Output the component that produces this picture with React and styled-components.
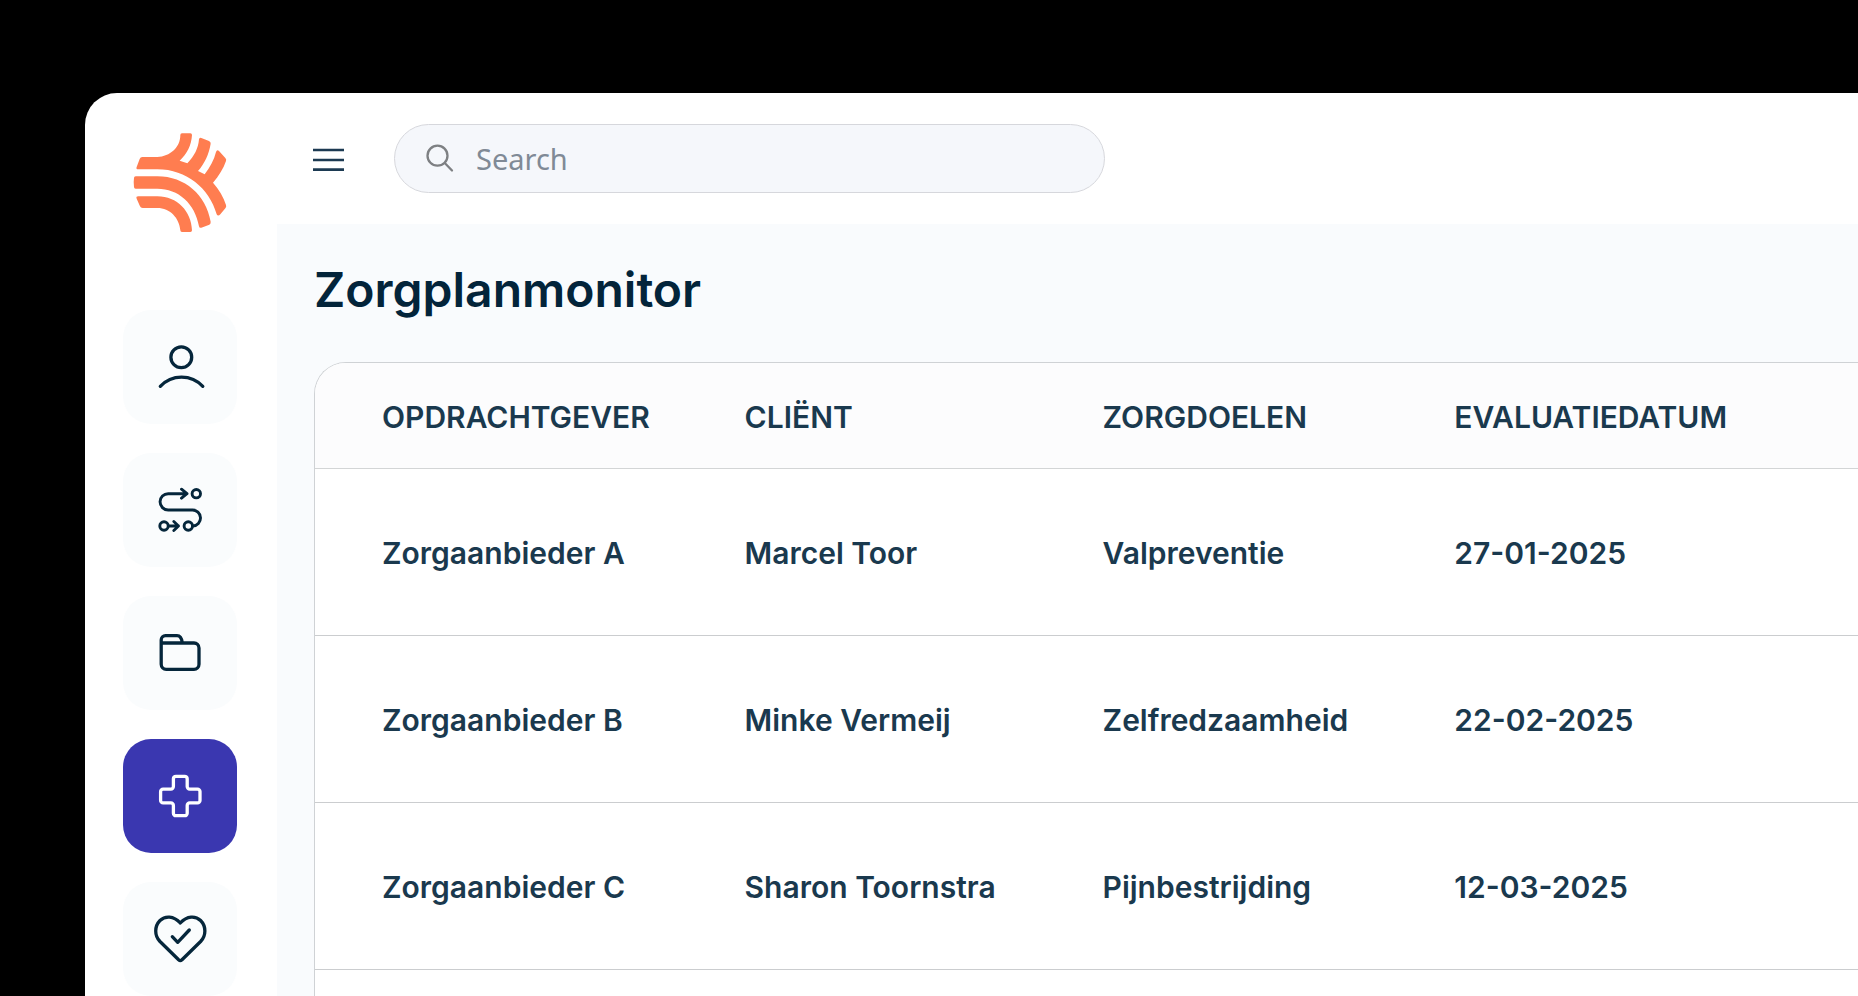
import React from "react";
import styled, { createGlobalStyle } from "styled-components";

const GlobalStyle = createGlobalStyle`
  *, *::before, *::after { box-sizing: border-box; }
  body {
    margin: 0;
    background: #000;
    font-family: Inter, "Liberation Sans", sans-serif;
  }
`;

const Page = styled.div`
  display: flex;
  min-height: 100vh;
  padding: 93px 0 0 85px;
  background: #000;
`;

const Shell = styled.div`
  flex: 1;
  min-width: 0;
  display: flex;
  background: #fff;
  border-top-left-radius: 32px;
  overflow: hidden;
`;

const Sidebar = styled.aside`
  flex: none;
  width: 192px;
  padding: 37px 40px 0 38px;
  display: flex;
  flex-direction: column;
  align-items: center;
  gap: 75px;
`;

const LogoLink = styled.a`
  display: block;
  height: 105px;
`;

const Nav = styled.nav`
  display: flex;
  flex-direction: column;
  gap: 29px;
`;

const NavButton = styled.button`
  display: flex;
  align-items: center;
  justify-content: center;
  width: 114px;
  height: 114px;
  padding: 0;
  border: 0;
  border-radius: 28px;
  background: ${(p) => (p.$active ? "#3a37b0" : "#fafcfd")};
  color: ${(p) => (p.$active ? "#fff" : "#05263b")};
  cursor: pointer;
`;

const Main = styled.div`
  flex: 1;
  min-width: 0;
  display: flex;
  flex-direction: column;
`;

const TopBar = styled.header`
  display: flex;
  align-items: center;
  gap: 50px;
  height: 131px;
  padding: 0 36px;
`;

const MenuButton = styled.button`
  flex: none;
  display: flex;
  padding: 0;
  border: 0;
  background: none;
  color: #1c3a52;
  cursor: pointer;
`;

const SearchBox = styled.label`
  flex: 1;
  max-width: 711px;
  height: 69px;
  display: flex;
  align-items: center;
  gap: 20px;
  padding: 0 31px;
  border: 1px solid #d6d7dc;
  border-radius: 35px;
  background: #f5f7fb;
  color: #7e8083;
`;

const SearchInput = styled.input`
  flex: 1;
  min-width: 0;
  padding: 0;
  border: 0;
  outline: 0;
  background: transparent;
  color: #05263b;
  font: 400 29px/40px "Noto Sans", sans-serif;
  &::placeholder { color: #808a96; opacity: 1; }
`;

const Content = styled.main`
  flex: 1;
  display: flex;
  flex-direction: column;
  padding: 34px 0 0 37px;
  background: #f9fbfd;
`;

const Title = styled.h1`
  margin: 0 0 40px;
  font-size: 48px;
  line-height: 64px;
  font-weight: 600;
  color: #03243a;
`;

const TableCard = styled.div`
  flex: 1;
  border: 1px solid #cfd2d5;
  border-width: 1px 0 0 1px;
  border-top-left-radius: 32px;
  background: #fff;
  overflow: hidden;
`;

const Table = styled.table`
  width: 100%;
  table-layout: fixed;
  border-collapse: separate;
  border-spacing: 0;
  color: #1a394e;
  font-size: 30px;
  line-height: 40px;
  font-weight: 600;
`;

const Col = styled.col`
  width: ${(p) => p.$width};
`;

const HeadCell = styled.th`
  height: 106px;
  padding: 2px 0 0 67px;
  border-bottom: 1px solid #d3d5d6;
  background: #fcfcfd;
  font-weight: inherit;
  text-align: left;
  white-space: nowrap;
`;

const Cell = styled.td`
  height: 167px;
  padding: 2px 0 0 67px;
  border-bottom: 1px solid #cbcdcf;
  white-space: nowrap;
`;

const Logo = () => (
  <svg width="100" height="105" viewBox="180 150 300 315" fill="#ff7d50" aria-hidden="true">
    <path d="M217 231H262C300 229 331 203 331 165Q331 160 336 160H361Q366 160 366 165C364 196 351 222 329 242L352 250C373 228 385 205 387 178Q388 171 394 174L417 183Q423 186 422 191C417 222 404 250 384 273L404 283C420 262 432 240 438 216Q441 207 447 213L466 234Q470 239 468 243C460 266 447 287 429 308C447 328 461 352 468 375Q470 380 466 385L451 403Q444 410 440 403C418 325 350 268 262 268H205Q197 268 200 261L209 237Q211 231 217 231Z" />
    <path d="M197 289H262C345 289 408 345 422 425Q423 431 418 434L394 443Q388 445 387 439C375 370 325 326 262 326H197Q192 326 192 321Q190 307 192 294Q192 289 197 289Z" />
    <path d="M205 349H262C322 349 364 394 366 451Q366 456 361 456H336Q331 456 331 451C328 414 300 384 262 384H218Q212 384 210 379L200 356Q197 349 205 349Z" />
  </svg>
);

const Icon = ({ weight = 3.3, children }) => (
  <svg
    width="64"
    height="64"
    viewBox="0 0 64 64"
    fill="none"
    stroke="currentColor"
    strokeWidth={weight}
    strokeLinecap="round"
    strokeLinejoin="round"
    aria-hidden="true"
  >
    {children}
  </svg>
);

const navItems = [
  {
    label: "Cliënten",
    icon: (
      <Icon>
        <circle cx="33.3" cy="22.3" r="10.4" />
        <path d="M12.3 51.3A29 29 0 0 1 54.8 51.3" />
      </Icon>
    ),
  },
  {
    label: "Trajecten",
    icon: (
      <Icon weight={2.9}>
        <circle cx="48.3" cy="15.7" r="4.2" />
        <path d="M39 15.7H20.2A8.15 8.15 0 0 0 20.2 32H44.2A8 8 0 0 1 44.8 48M33.5 11.2 39 15.7 33.5 20.2" />
        <circle cx="16" cy="48" r="4.2" />
        <circle cx="40.3" cy="48" r="4.2" />
        <path d="M20.5 48H30.5M25.8 43.5 30.5 48 25.8 52.5" />
      </Icon>
    ),
  },
  {
    label: "Dossiers",
    icon: (
      <Icon>
        <path d="M13.2 22H46A5 5 0 0 1 51 27V43.3A5 5 0 0 1 46 48.3H18.2A5 5 0 0 1 13.2 43.3V19A4.3 4.3 0 0 1 17.5 14.7H29C32.5 14.7 33.8 17.5 34.3 22" />
      </Icon>
    ),
  },
  {
    label: "Zorg",
    active: true,
    icon: (
      <Icon>
        <path d="M27.9 12.3H36.7A2.5 2.5 0 0 1 39.2 14.8V22.6A2.5 2.5 0 0 0 41.7 25.1H49.5A2.5 2.5 0 0 1 52 27.6V36.4A2.5 2.5 0 0 1 49.5 38.9H41.7A2.5 2.5 0 0 0 39.2 41.4V49.2A2.5 2.5 0 0 1 36.7 51.7H27.9A2.5 2.5 0 0 1 25.4 49.2V41.4A2.5 2.5 0 0 0 22.9 38.9H15.1A2.5 2.5 0 0 1 12.6 36.4V27.6A2.5 2.5 0 0 1 15.1 25.1H22.9A2.5 2.5 0 0 0 25.4 22.6V14.8A2.5 2.5 0 0 1 27.9 12.3Z" />
      </Icon>
    ),
  },
  {
    label: "Gezondheid",
    icon: (
      <Icon>
        <path d="M32.3 16C25.5 8.5 17 8.6 12 13.5C6.3 19.3 6.3 28.5 12 34.5L30.6 52.8Q32.3 54.3 34 52.8L52.6 34.5C58.3 28.5 58.3 19.3 52.6 13.5C47.6 8.6 39.1 8.5 32.3 16Z" />
        <path d="M24.3 29.7 29.7 35.3 41.3 23" />
      </Icon>
    ),
  },
];

const columns = [
  { title: "OPDRACHTGEVER", width: "23.5%" },
  { title: "CLIËNT", width: "23.2%" },
  { title: "ZORGDOELEN", width: "22.8%" },
  { title: "EVALUATIEDATUM", width: "auto" },
];

const rows = [
  ["Zorgaanbieder A", "Marcel Toor", "Valpreventie", "27-01-2025"],
  ["Zorgaanbieder B", "Minke Vermeij", "Zelfredzaamheid", "22-02-2025"],
  ["Zorgaanbieder C", "Sharon Toornstra", "Pijnbestrijding", "12-03-2025"],
];

export default function App() {
  return (
    <>
      <GlobalStyle />
      <Page>
        <Shell>
          <Sidebar>
            <LogoLink href="#" aria-label="Home">
              <Logo />
            </LogoLink>
            <Nav>
              {navItems.map((item) => (
                <NavButton
                  key={item.label}
                  type="button"
                  aria-label={item.label}
                  aria-current={item.active ? "page" : undefined}
                  $active={item.active}
                >
                  {item.icon}
                </NavButton>
              ))}
            </Nav>
          </Sidebar>
          <Main>
            <TopBar>
              <MenuButton type="button" aria-label="Menu">
                <svg width="31" height="24" viewBox="0 0 31 24" stroke="currentColor" strokeWidth="2.7" aria-hidden="true">
                  <path d="M0 3H31M0 13H31M0 22.600H31" />
                </svg>
              </MenuButton>
              <SearchBox>
                <svg width="30" height="30" viewBox="0 0 30 30" fill="none" stroke="currentColor" strokeWidth="2.3" strokeLinecap="round" aria-hidden="true">
                  <circle cx="11.5" cy="11.7" r="10" />
                  <path d="M19 19.2 26 26.5" />
                </svg>
                <SearchInput type="search" placeholder="Search" aria-label="Search" />
              </SearchBox>
            </TopBar>
            <Content>
              <Title>Zorgplanmonitor</Title>
              <TableCard>
                <Table>
                  <colgroup>
                    {columns.map((c) => (
                      <Col key={c.title} $width={c.width} />
                    ))}
                  </colgroup>
                  <thead>
                    <tr>
                      {columns.map((c) => (
                        <HeadCell key={c.title} scope="col">{c.title}</HeadCell>
                      ))}
                    </tr>
                  </thead>
                  <tbody>
                    {rows.map((row) => (
                      <tr key={row[0]}>
                        {row.map((value) => (
                          <Cell key={value}>{value}</Cell>
                        ))}
                      </tr>
                    ))}
                  </tbody>
                </Table>
              </TableCard>
            </Content>
          </Main>
        </Shell>
      </Page>
    </>
  );
}
